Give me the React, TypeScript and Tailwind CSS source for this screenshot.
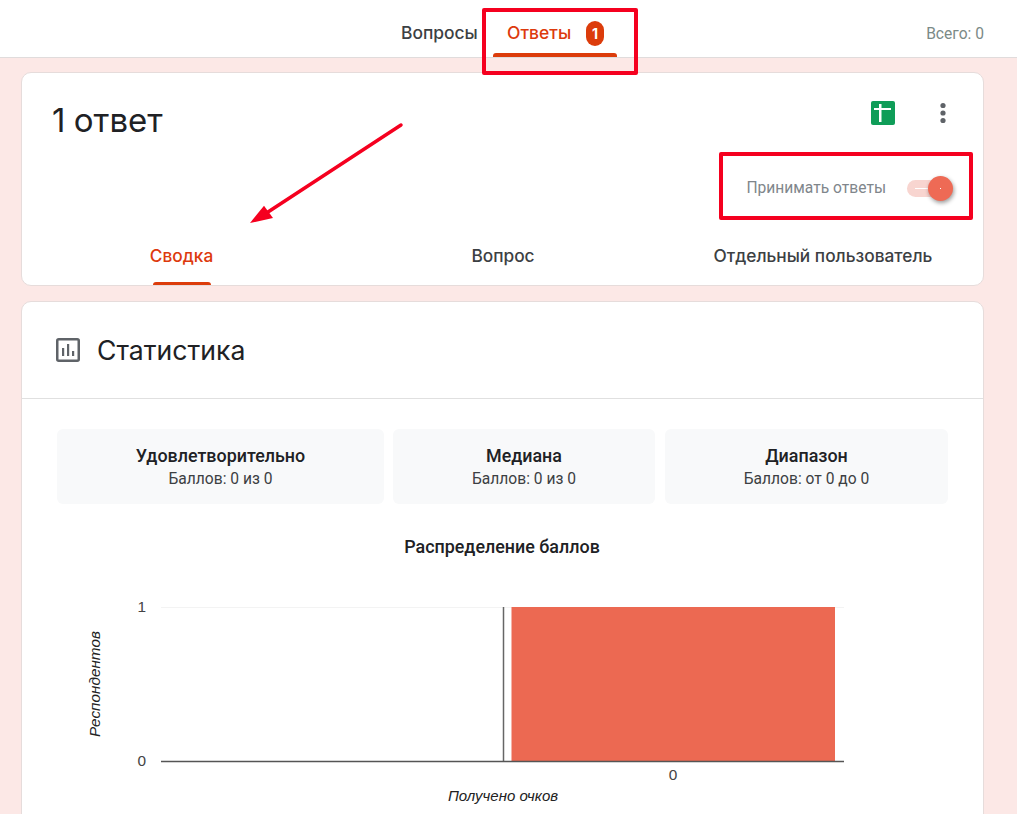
import React from "react";

const sans = "font-['Roboto','Liberation_Sans',sans-serif]";
const display = "font-['Inter','Roboto',sans-serif]";

function Tile({ title, sub, className }: { title: string; sub: string; className: string }) {
  return (
    <div className={`flex h-[75px] flex-col items-center justify-center rounded-[6px] bg-[#f8f9fa] ${className}`}>
      <div className="text-[17.9px] leading-[23px] font-medium text-[#202124]">{title}</div>
      <div className="pt-[2px] text-[15.6px] leading-[20px] text-[#3c4043]">{sub}</div>
    </div>
  );
}

function Chart() {
  return (
    <svg width="800" height="240" viewBox="0 0 800 240" className="block font-['Liberation_Sans',Arial,sans-serif]">
      <line x1="101" y1="34.5" x2="784" y2="34.5" stroke="#f3f3f3" strokeWidth="1" />
      <text x="86" y="39" textAnchor="end" fontSize="15.4" fill="#444">1</text>
      <text x="86" y="193" textAnchor="end" fontSize="15.4" fill="#444">0</text>
      <rect x="451.5" y="34" width="323.5" height="154" fill="#ec6952" />
      <line x1="443.5" y1="34" x2="443.5" y2="188" stroke="#666" strokeWidth="1.5" />
      <line x1="101" y1="188.5" x2="784" y2="188.5" stroke="#555" strokeWidth="1.5" />
      <text x="613" y="207" textAnchor="middle" fontSize="15.4" fill="#444">0</text>
      <text x="443" y="228" textAnchor="middle" fontSize="15" fontStyle="italic" fill="#222">Получено очков</text>
      <text transform="translate(40 111) rotate(-90)" textAnchor="middle" fontSize="15.3" fontStyle="italic" fill="#222">Респондентов</text>
    </svg>
  );
}

export default function App() {
  return (
    <div className={`relative h-[814px] w-[1017px] overflow-hidden bg-[#fce8e6] ${sans}`}>
      {/* Top bar */}
      <header className={`relative flex h-[58px] items-end border-b border-[#e0dcdc] bg-white ${display}`}>
        <div className="ml-[401px] flex h-full w-[76px] items-center whitespace-nowrap pt-[9px] text-[17.4px] font-medium text-[#3c4043]">Вопросы</div>
        <div className="relative ml-[16px] flex h-full w-[124px] items-center pl-[14px] pt-[9px]">
          <span className="w-[64px] whitespace-nowrap text-[17.5px] font-medium text-[#dd3a0d]">Ответы</span>
          <span className="ml-[15px] flex h-[25px] w-[18px] items-center justify-center rounded-[9px] bg-[#dc3c0b] text-[14px] font-bold text-white">1</span>
          <div className="absolute bottom-0 left-0 h-[4px] w-full rounded-t-[3px] bg-[#dc3c0b]" />
        </div>
        <div className={`ml-auto mr-[33px] flex h-full items-center pt-[13px] text-[15.6px] text-[#7b8a87] ${sans}`}>Всего: 0</div>
      </header>

      {/* Summary card */}
      <section className="ml-[21px] mt-[14px] h-[214px] w-[963px] overflow-hidden rounded-[10px] border border-[#e6dcdb] bg-white">
        <div className="flex h-[128px]">
          <div className={`ml-[30px] mt-[25px] text-[33px] leading-[44px] text-[#202124] [word-spacing:-1px] ${display}`}>1 ответ</div>
          <div className="ml-auto flex flex-col items-end">
            <div className="mr-[36px] mt-[28px] flex items-center gap-[44px]">
              <svg width="24" height="24" viewBox="0 0 24 24">
                <rect width="24" height="24" rx="2" fill="#0f9d58" />
                <rect x="8" y="3" width="2.5" height="18" fill="#fff" />
                <rect x="3" y="7" width="17" height="2" fill="#fff" />
              </svg>
              <svg width="8" height="24" viewBox="0 0 8 24" fill="#5f6368">
                <circle cx="4" cy="4.5" r="2.6" />
                <circle cx="4" cy="12" r="2.6" />
                <circle cx="4" cy="19.5" r="2.6" />
              </svg>
            </div>
            <div className="mr-[30px] mt-[53px] flex items-center">
              <span className="text-[15.6px] leading-[20px] text-[#80868b]">Принимать ответы</span>
              <div className="relative ml-[21px] h-[17px] w-[46px]">
                <div className="absolute left-0 top-0 h-[17px] w-[36px] rounded-full bg-[#f8d5d0]" />
                <div className="absolute left-[8px] top-[8px] h-px w-[14px] bg-white" />
                <div className="absolute left-[21px] top-[-4px] flex h-[25px] w-[25px] items-center justify-center rounded-full bg-[#ee6a55] shadow-[1px_2px_4px_rgba(0,0,0,0.4)]">
                  <div className="h-px w-px bg-white" />
                </div>
              </div>
            </div>
          </div>
        </div>
        <nav className={`grid h-[85px] grid-cols-[319px_324px_316px] text-[17.3px] font-medium ${display}`}>
          <div className="relative flex items-start justify-center pt-[42px] text-[#dd3a0d]">
            Сводка
            <div className="absolute bottom-0 left-[131px] h-[4px] w-[58px] rounded-t-[3px] bg-[#dc3c0b]" />
          </div>
          <div className="flex items-start justify-center pt-[42px] text-[#3c4043]">Вопрос</div>
          <div className="flex items-start justify-center pt-[42px] text-[#3c4043]">Отдельный пользователь</div>
        </nav>
      </section>

      {/* Statistics card */}
      <section className="ml-[21px] mt-[15px] h-[600px] w-[963px] rounded-[10px] border border-[#e6dcdb] bg-white">
        <div className="flex h-[97px] items-center border-b border-[#e0e0e0] pl-[34px]">
          <svg width="24" height="24" viewBox="0 0 24 24" fill="#5f6368">
            <rect x="1.25" y="1.25" width="21.5" height="21.5" rx="1.5" fill="none" stroke="#5f6368" strokeWidth="2.5" />
            <rect x="6" y="10" width="2.2" height="8" />
            <rect x="11" y="6" width="2.2" height="12" />
            <rect x="16" y="13" width="2.2" height="5" />
          </svg>
          <span className={`ml-[17px] mt-[2px] text-[26.6px] text-[#202124] ${display}`}>Статистика</span>
        </div>
        <div className="ml-[35px] mt-[30px] flex">
          <Tile title="Удовлетворительно" sub="Баллов: 0 из 0" className="w-[327px]" />
          <Tile title="Медиана" sub="Баллов: 0 из 0" className="ml-[9px] w-[262px]" />
          <Tile title="Диапазон" sub="Баллов: от 0 до 0" className="ml-[10px] w-[283px]" />
        </div>
        <div className="mt-[31px] pr-[1px] text-center text-[17.9px] leading-[24px] font-medium text-[#202124]">Распределение баллов</div>
        <div className="ml-[38px] mt-[14px]">
          <Chart />
        </div>
      </section>

      {/* Red annotations over the page */}
      <div className="absolute left-[482px] top-[8px] h-[67px] w-[156px] rounded-[2px] border-[4px] border-[#f5001f]" />
      <div className="absolute left-[719px] top-[152px] h-[68px] w-[254px] rounded-[2px] border-[4px] border-[#f5001f]" />
      <svg className="absolute left-[240px] top-[115px]" width="170" height="115" viewBox="0 0 170 115">
        <line x1="161" y1="10" x2="28" y2="97" stroke="#f5001f" strokeWidth="3.5" strokeLinecap="round" />
        <polygon points="10,108 24,90.7 33,103" fill="#f5001f" />
      </svg>
    </div>
  );
}
